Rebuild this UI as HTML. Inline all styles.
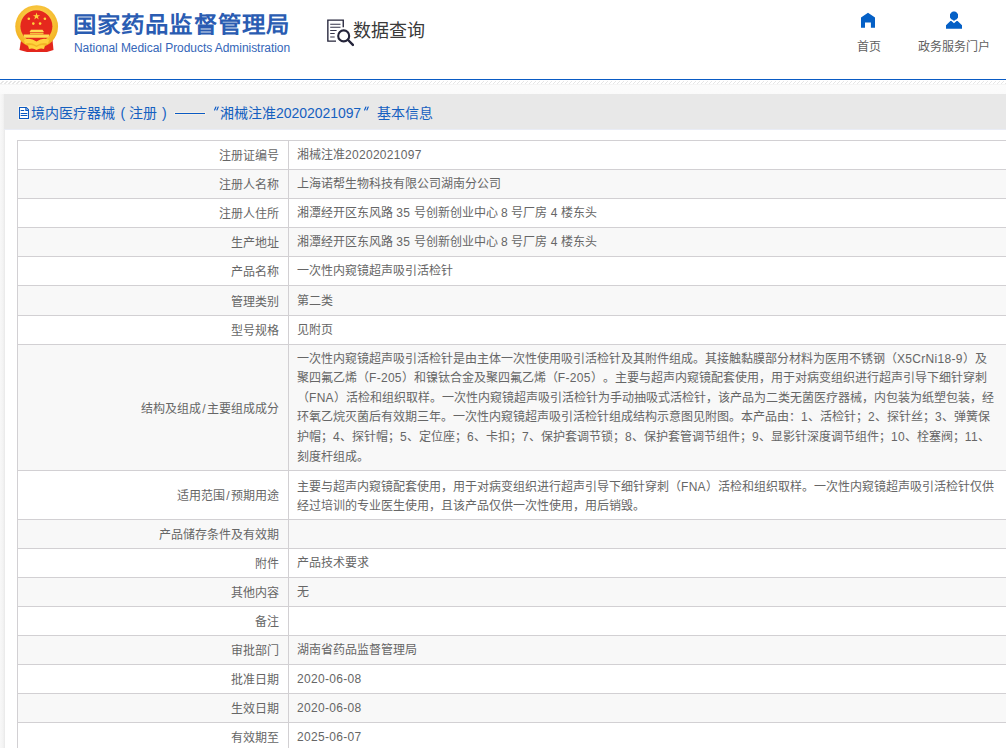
<!DOCTYPE html>
<html lang="zh-CN">
<head>
<meta charset="utf-8">
<title>数据查询</title>
<style>
html,body{margin:0;padding:0;}
body{width:1006px;height:748px;overflow:hidden;position:relative;background:#f5f5f5;font-family:"Liberation Sans",sans-serif;color:#555;}
.abs{position:absolute;}
#hdr{position:absolute;left:0;top:0;width:1006px;height:79px;background:#fff;}
#blue{position:absolute;left:0;top:79px;width:1006px;height:1px;background:#0a5bc4;}
#stripe{position:absolute;left:0;top:80px;width:1006px;height:4px;
 background:repeating-linear-gradient(135deg,#fff 0px,#fff 2.1px,#e6e6e6 2.1px,#e6e6e6 2.83px);border-top:1px solid #fff;box-sizing:border-box;}
#pagebg{position:absolute;left:0;top:85px;width:1006px;height:663px;background:linear-gradient(#fcfcfc,#f6f6f6 30px);}
#lshadow{position:absolute;left:0;top:94px;width:5px;height:654px;background:linear-gradient(90deg,#f8f8f8,#f3f3f3 60%,#e9e9e9);}
#box{position:absolute;left:4px;top:94px;width:1002px;height:654px;background:#fff;border-left:1px solid #ebebeb;box-sizing:border-box;}
#bar{position:absolute;left:4px;top:94px;width:1002px;height:35px;background:#e8e8e8;}
#barline{position:absolute;left:4px;top:129px;width:1002px;height:1px;background:#e9ecf5;}
.bt{position:absolute;top:103px;font-size:14px;line-height:20px;color:#1560c0;white-space:nowrap;}
.t{position:absolute;white-space:nowrap;text-spacing-trim:space-all;font-size:12px;line-height:16px;color:#666;}
.row{position:absolute;left:17px;width:990px;border-top:1px solid #d2d0d3;box-sizing:border-box;}
.g{background:#f8f8f8;}
#vl{position:absolute;left:17px;top:140px;width:1px;height:610px;background:#d2d0d3;}
#vd{position:absolute;left:288px;top:140px;width:1px;height:610px;background:#d2d0d3;}
.a{letter-spacing:0.3px;}
.sl{display:inline-block;width:6px;text-align:center;}
.lab{position:absolute;right:727px;text-align:right;}
</style>
</head>
<body>
<div id="hdr">
  <!-- emblem -->
  <svg class="abs" style="left:13px;top:3px" width="48" height="50" viewBox="0 0 48 50">
    <defs>
      <radialGradient id="gold" cx="50%" cy="40%" r="60%">
        <stop offset="0" stop-color="#ffe066"/><stop offset="1" stop-color="#f2b01e"/>
      </radialGradient>
    </defs>
    <path d="M8 37 L6.5 47 L14 49 L34 49 L40.5 47 L39.5 37 Z" fill="#e3261c"/>
    <circle cx="23.65" cy="23.6" r="21.4" fill="url(#gold)"/>
    <circle cx="23.4" cy="23.3" r="16" fill="#e5281d"/>
    <polygon points="23.5,9.6 24.4,12.2 27.1,12.2 24.9,13.8 25.7,16.4 23.5,14.8 21.3,16.4 22.1,13.8 19.9,12.2 22.6,12.2" fill="#ffd33c"/>
    <circle cx="15.8" cy="15.8" r="1.3" fill="#ffd33c"/>
    <circle cx="31.9" cy="15.8" r="1.3" fill="#ffd33c"/>
    <circle cx="20.3" cy="20.6" r="1.3" fill="#ffd33c"/>
    <circle cx="27.1" cy="20.6" r="1.3" fill="#ffd33c"/>
    <path d="M18 26.8 L29.5 26.8 L31 29 L16.5 29 Z" fill="#ffdc55"/>
    <path d="M17 29.6 H30.5 V31.3 H17 Z" fill="#f5c23a"/>
    <path d="M10.6 31.6 H36.3 L35.5 34.8 H11.4 Z" fill="#ffdc55"/>
    <path d="M11 37 Q17 34 23.5 38.5 Q30 34 36 37 L35 41 Q30 38.5 23.5 42.5 Q17 38.5 12 41 Z" fill="#ffd33c"/>
    <path d="M15 42.5 Q19 41 23.5 44 Q28 41 32 42.5 L31 46 Q27 44.5 23.5 47 Q20 44.5 16 46 Z" fill="#ffd33c"/>
  </svg>
  <div class="abs" style="left:73px;top:11px;font-size:23px;line-height:30px;font-weight:bold;color:#2a5cb2;white-space:nowrap;letter-spacing:0.65px;transform:scale(1.02,0.93);transform-origin:0 0;">国家药品监督管理局</div>
  <div class="abs" style="left:74px;top:40.5px;font-size:12px;line-height:14px;color:#3466b8;white-space:nowrap;letter-spacing:-0.05px;">National Medical Products Administration</div>
  <!-- data query icon -->
  <svg class="abs" style="left:326px;top:19px" width="28" height="28" viewBox="0 0 28 28">
    <path d="M17.25 8.3 V1.05 H1.85 V22.05 H10" fill="none" stroke="#24243a" stroke-width="1.35"/>
    <path d="M4.2 5.3 H14.5 M4.2 8.3 H14.5 M4.2 11.5 H10.6 M4.2 14.5 H8.7 M4.2 18 H8.7" stroke="#35354a" stroke-width="1.05"/>
    <circle cx="17.7" cy="16.9" r="5.5" fill="#fff" stroke="#24243a" stroke-width="2.1"/>
    <path d="M22.1 21 L26.9 25.9" stroke="#24243a" stroke-width="2.4" stroke-linecap="round"/>
  </svg>
  <div class="abs" style="left:353px;top:17.5px;font-size:18px;line-height:26px;color:#3a3a3a;white-space:nowrap;">数据查询</div>
  <!-- home icon -->
  <svg class="abs" style="left:860px;top:12px" width="16" height="17" viewBox="0 0 16 17">
    <path d="M1 5.6 L8 0.8 L15 5.6 V15.8 H10.9 V10.5 H5 V15.8 H1 Z" fill="#0560c6"/>
  </svg>
  <div class="abs t" style="left:857px;top:38.5px;color:#5f5f5f;">首页</div>
  <!-- person icon -->
  <svg class="abs" style="left:945px;top:11px" width="18" height="19" viewBox="0 0 18 19">
    <path d="M6.3 1.6 L7.9 0.6 H10.1 L11.7 1.6 L13 3.2 V6.6 L11.7 8.3 L10 9.1 L9 10 L8 9.1 L6.3 8.3 L5 6.6 V3.2 Z" fill="#0560c6"/>
    <path d="M1 17.8 V14.3 L5.4 9.9 H6.4 L9 12.3 L11.6 9.9 H12.6 L17 14.3 V17.8 Z" fill="#0560c6"/>
  </svg>
  <div class="abs t" style="left:918px;top:38.5px;color:#5f5f5f;">政务服务门户</div>
</div>
<div id="blue"></div>
<div id="stripe"></div>
<div id="pagebg"></div>
<div id="lshadow"></div>
<div id="box"></div>
<div id="bar"></div>
<div id="barline"></div>
<svg class="abs" style="left:16px;top:104px" width="16" height="18" viewBox="0 0 16 18">
  <rect x="2" y="2" width="12" height="14" fill="#fbf6ef" opacity="0.8"/>
  <path d="M3.5 3.5 H10.3 L12.5 5.7 V14.5 H3.5 Z" fill="#fff" stroke="#0a58c0" stroke-width="1.05"/>
  <path d="M9.9 3.8 V6.4 H12.3" fill="none" stroke="#0a58c0" stroke-width="1.2"/>
  <path d="M5.1 6.5 H7.8 M5.1 9.5 H10.9 M5.1 11.5 H10.9" stroke="#0a58c0" stroke-width="1.1" stroke-linecap="round"/>
</svg>
<div class="bt" style="left:31px">境内医疗器械</div>
<div class="bt" style="left:120.5px">(</div>
<div class="bt" style="left:129px">注册</div>
<div class="bt" style="left:162px">)</div>
<div class="abs" style="left:174px;top:112px;width:32px;height:3px;background:#f5efe6;"></div><div class="abs" style="left:175px;top:113px;width:30px;height:1px;background:#0a5ac4;"></div>
<svg class="abs" style="left:213px;top:106px" width="7" height="5" viewBox="0 0 7 5"><path d="M1.6 3.9 L2.9 1.1 M3.9 3.9 L5.2 1.1" stroke="#0a58c4" stroke-width="1.15" stroke-linecap="round"/></svg>
<div class="bt" style="left:219.5px">湘械注准</div>
<div class="bt" style="left:276px;letter-spacing:-0.05px">20202021097</div>
<svg class="abs" style="left:363px;top:106px" width="7" height="5" viewBox="0 0 7 5"><path d="M1.6 3.9 L2.9 1.1 M3.9 3.9 L5.2 1.1" stroke="#0a58c4" stroke-width="1.15" stroke-linecap="round"/></svg>
<div class="bt" style="left:377px">基本信息</div>

<div id="table">
<div class="row" style="top:140px;height:30px"></div>
<div class="t lab" style="top:148.00px">注册证编号</div>
<div class="t val" style="left:297px;top:146.20px;line-height:19.6px">湘械注准<span class="a">20202021097</span></div>
<div class="row g" style="top:169px;height:30px"></div>
<div class="t lab" style="top:177.00px">注册人名称</div>
<div class="t val" style="left:297px;top:175.20px;line-height:19.6px">上海诺帮生物科技有限公司湖南分公司</div>
<div class="row" style="top:198px;height:30px"></div>
<div class="t lab" style="top:206.00px">注册人住所</div>
<div class="t val" style="left:297px;top:204.20px;line-height:19.6px">湘潭经开区东风路 <span class="a">35</span> 号创新创业中心 <span class="a">8</span> 号厂房 <span class="a">4</span> 楼东头</div>
<div class="row g" style="top:227px;height:30px"></div>
<div class="t lab" style="top:235.00px">生产地址</div>
<div class="t val" style="left:297px;top:233.20px;line-height:19.6px">湘潭经开区东风路 <span class="a">35</span> 号创新创业中心 <span class="a">8</span> 号厂房 <span class="a">4</span> 楼东头</div>
<div class="row" style="top:256px;height:30px"></div>
<div class="t lab" style="top:264.00px">产品名称</div>
<div class="t val" style="left:297px;top:262.20px;line-height:19.6px">一次性内窥镜超声吸引活检针</div>
<div class="row g" style="top:285px;height:31px"></div>
<div class="t lab" style="top:293.50px">管理类别</div>
<div class="t val" style="left:297px;top:291.70px;line-height:19.6px">第二类</div>
<div class="row" style="top:315px;height:30px"></div>
<div class="t lab" style="top:323.00px">型号规格</div>
<div class="t val" style="left:297px;top:321.20px;line-height:19.6px">见附页</div>
<div class="row g" style="top:344px;height:127px"></div>
<div class="t lab" style="top:400.50px">结构及组成<span class="sl">/</span>主要组成成分</div>
<div class="t val" style="left:297px;top:349.70px;line-height:19.6px">一次性内窥镜超声吸引活检针是由主体一次性使用吸引活检针及其附件组成。其接触黏膜部分材料为医用不锈钢（<span class="a">X5CrNi18-9</span>）及<br>聚四氟乙烯（<span class="a">F-205</span>）和镍钛合金及聚四氟乙烯（<span class="a">F-205</span>）。主要与超声内窥镜配套使用，用于对病变组织进行超声引导下细针穿刺<br>（<span class="a">FNA</span>）活检和组织取样。一次性内窥镜超声吸引活检针为手动抽吸式活检针，该产品为二类无菌医疗器械，内包装为纸塑包装，经<br>环氧乙烷灭菌后有效期三年。一次性内窥镜超声吸引活检针组成结构示意图见附图。本产品由：<span class="a">1</span>、活检针；<span class="a">2</span>、探针丝；<span class="a">3</span>、弹簧保<br>护帽；<span class="a">4</span>、探针帽；<span class="a">5</span>、定位座；<span class="a">6</span>、卡扣；<span class="a">7</span>、保护套调节锁；<span class="a">8</span>、保护套管调节组件；<span class="a">9</span>、显影针深度调节组件；<span class="a">10</span>、栓塞阀；<span class="a">11</span>、<br>刻度杆组成。</div>
<div class="row" style="top:470px;height:50px"></div>
<div class="t lab" style="top:488.00px">适用范围<span class="sl">/</span>预期用途</div>
<div class="t val" style="left:297px;top:477.90px;line-height:19.0px">主要与超声内窥镜配套使用，用于对病变组织进行超声引导下细针穿刺（<span class="a">FNA</span>）活检和组织取样。一次性内窥镜超声吸引活检针仅供<br>经过培训的专业医生使用，且该产品仅供一次性使用，用后销毁。</div>
<div class="row g" style="top:519px;height:30px"></div>
<div class="t lab" style="top:527.00px">产品储存条件及有效期</div>
<div class="row" style="top:548px;height:30px"></div>
<div class="t lab" style="top:556.00px">附件</div>
<div class="t val" style="left:297px;top:554.20px;line-height:19.6px">产品技术要求</div>
<div class="row g" style="top:577px;height:30px"></div>
<div class="t lab" style="top:585.00px">其他内容</div>
<div class="t val" style="left:297px;top:583.20px;line-height:19.6px">无</div>
<div class="row" style="top:606px;height:30px"></div>
<div class="t lab" style="top:614.00px">备注</div>
<div class="row g" style="top:635px;height:30px"></div>
<div class="t lab" style="top:643.00px">审批部门</div>
<div class="t val" style="left:297px;top:641.20px;line-height:19.6px">湖南省药品监督管理局</div>
<div class="row" style="top:664px;height:30px"></div>
<div class="t lab" style="top:672.00px">批准日期</div>
<div class="t val" style="left:297px;top:670.20px;line-height:19.6px"><span class="a">2020-06-08</span></div>
<div class="row g" style="top:693px;height:30px"></div>
<div class="t lab" style="top:701.00px">生效日期</div>
<div class="t val" style="left:297px;top:699.20px;line-height:19.6px"><span class="a">2020-06-08</span></div>
<div class="row" style="top:722px;height:30px"></div>
<div class="t lab" style="top:730.00px">有效期至</div>
<div class="t val" style="left:297px;top:728.20px;line-height:19.6px"><span class="a">2025-06-07</span></div>
<div id="vl"></div><div id="vd"></div>
</div>
</body>
</html>
